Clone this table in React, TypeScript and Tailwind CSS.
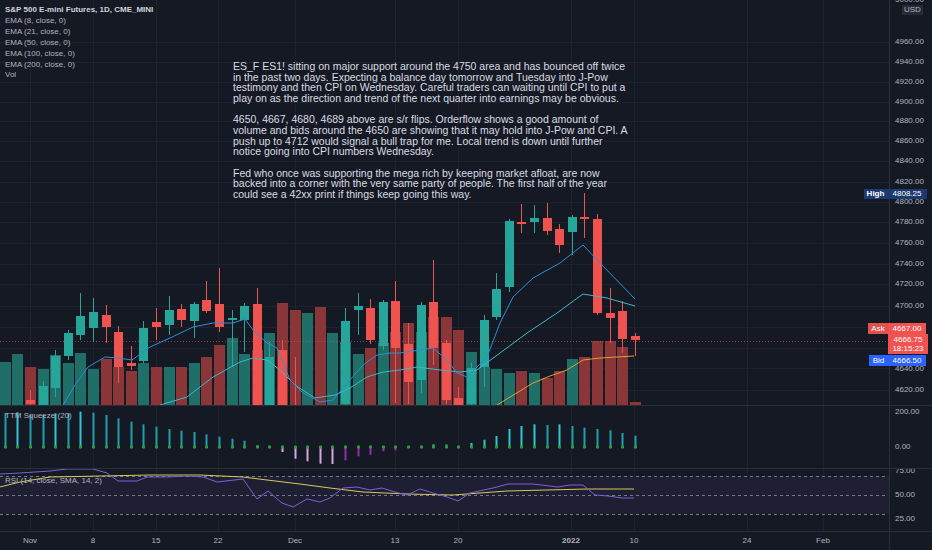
import React from 'react'

// bar spacing on the time scale, first visible bar (Nov 1) sits at x=30
const STEP = 12.6
const cx = (i: number) => Math.round(30 + i * STEP)

// [index, up, bodyTop, bodyBottom, wickTop, wickBottom] in pixel space
const candles: [number, number, number, number, number, number][] = [
  [0, 0, 400, 404, 390, 405],
  [1, 1, 386, 405, 381, 405],
  [2, 1, 356, 388, 350, 397],
  [3, 1, 333, 356, 330, 360],
  [4, 1, 316, 335, 293, 340],
  [5, 1, 312, 328, 298, 342],
  [6, 0, 315, 327, 305, 343],
  [7, 0, 332, 367, 326, 383],
  [8, 0, 363, 366, 346, 370],
  [9, 1, 328, 361, 321, 363],
  [10, 0, 322, 327, 308, 340],
  [11, 1, 310, 325, 296, 335],
  [12, 0, 309, 320, 304, 327],
  [13, 1, 304, 321, 302, 338],
  [14, 0, 300, 311, 281, 313],
  [15, 0, 304, 327, 268, 332],
  [16, 1, 318, 320, 310, 367],
  [17, 1, 306, 320, 303, 352],
  [18, 0, 304, 405, 288, 405],
  [19, 1, 357, 405, 342, 405],
  [20, 0, 350, 405, 340, 405],
  [21, 0, 405, 405, 357, 405],
  [25, 1, 321, 404, 308, 405],
  [26, 1, 306, 310, 293, 335],
  [27, 0, 308, 340, 299, 344],
  [28, 1, 302, 346, 300, 350],
  [29, 0, 301, 348, 281, 403],
  [30, 0, 344, 382, 323, 404],
  [31, 1, 305, 380, 302, 393],
  [32, 0, 302, 348, 260, 365],
  [33, 0, 343, 400, 340, 404],
  [34, 0, 398, 405, 387, 405],
  [35, 1, 368, 404, 363, 405],
  [36, 1, 320, 367, 315, 387],
  [37, 1, 289, 317, 273, 320],
  [38, 1, 221, 287, 219, 292],
  [39, 0, 222, 224, 204, 233],
  [40, 1, 218, 222, 205, 233],
  [41, 0, 218, 231, 203, 235],
  [42, 0, 229, 245, 224, 253],
  [43, 1, 217, 232, 215, 255],
  [44, 0, 217, 219, 193, 238],
  [45, 0, 219, 313, 214, 315],
  [46, 0, 313, 318, 288, 343],
  [47, 0, 311, 339, 301, 353],
  [48, 0, 336, 340, 333, 356],
]

const volumes: [number, number, number][] = [
  [-2, 1, 362], [-1, 1, 354], [0, 0, 367], [1, 1, 369], [2, 1, 355], [3, 1, 363],
  [4, 1, 353], [5, 1, 369], [6, 0, 359], [7, 0, 367], [8, 0, 371], [9, 1, 363],
  [10, 0, 367], [11, 1, 367], [12, 0, 367], [13, 1, 363], [14, 0, 357], [15, 0, 345],
  [16, 1, 338], [17, 1, 354], [18, 0, 350], [19, 1, 333], [20, 0, 303], [21, 0, 310],
  [22, 1, 313], [23, 0, 307], [24, 1, 333], [25, 1, 342], [26, 1, 354], [27, 0, 348],
  [28, 1, 343], [29, 0, 332], [30, 0, 323], [31, 1, 332], [32, 0, 317], [33, 0, 317],
  [34, 0, 330], [35, 1, 352], [36, 1, 367], [37, 1, 369], [38, 1, 373], [39, 0, 371],
  [40, 1, 373], [41, 0, 378], [42, 0, 371], [43, 1, 359], [44, 0, 357], [45, 0, 341],
  [46, 0, 341], [47, 0, 347], [48, 0, 402],
]

const ema8 = [[63,405],[75,385],[88,367],[105,357],[118,358],[132,360],[150,347],[170,338],[193,327],[213,323],[233,323],[245,319],[253,330],[267,343],[277,348],[290,380],[303,393],[320,402],[333,400],[350,380],[363,365],[377,355],[390,353],[400,353],[420,350],[433,348],[447,360],[457,373],[467,377],[487,357],[500,323],[513,297],[533,278],[560,263],[583,245],[602,265],[635,299]]
const ema21 = [[160,405],[187,397],[213,377],[240,362],[253,358],[267,360],[280,370],[295,385],[315,398],[335,395],[350,388],[367,377],[383,372],[400,370],[417,367],[440,370],[460,372],[477,370],[500,353],[527,333],[557,313],[583,294],[607,298],[635,306]]
const ema50 = [[497,405],[515,394],[533,383],[550,376],[567,370],[583,360],[600,358],[617,357],[634,356]]

// squeeze momentum, px above the zero line, starting at index -2
const ttm = [34, 34.7, 32, 32, 33.7, 33.7, 35.3, 34.3, 32, 28.7, 25.3, 22.7, 20.3, 18, 16.3, 15, 12.7, 10.3, 8.3, 6.3, 2, 1, -5, -11.7, -14.3, -16.7, -17, -13.3, -9.3, -7.7, -4.3, -3.3, -1, 0.5, 2.7, 2.7, 0.5, 4, 7.3, 11, 18, 21, 22.7, 22, 22.7, 21, 19.3, 18, 16.7, 14, 11.3]

const rsi = [[0,474],[20,473],[50,471],[67,469],[93,469],[107,473],[118,481],[137,481],[147,477],[167,477],[187,476],[203,477],[217,482],[243,479],[257,499],[268,491],[282,503],[293,507],[307,499],[320,502],[330,498],[343,488],[357,487],[370,490],[382,488],[395,492],[407,495],[420,489],[433,493],[447,497],[458,501],[470,493],[493,488],[508,484],[533,484],[558,487],[570,485],[583,485],[595,495],[608,496],[622,498],[634,498]]
const rsiMa = [[0,487],[20,482],[50,477],[100,476],[150,475],[200,475],[243,477],[267,480],[300,484],[330,488],[363,492],[407,494],[453,495],[480,493],[507,491],[547,490],[587,489],[634,489]]

// grid rows every 20 points; labels hidden behind the ask/last badges are left out
const gridRows = [42, 62, 82, 102, 121, 141, 161, 182, 202, 222, 243, 264, 284, 306, 327, 348, 368, 390]
const priceTicks: [string, number][] = [
  ['5000.00', 0], ['4960.00', 42], ['4940.00', 62], ['4920.00', 82], ['4900.00', 102],
  ['4880.00', 121], ['4860.00', 141], ['4840.00', 161], ['4820.00', 182], ['4800.00', 202],
  ['4780.00', 222], ['4760.00', 243], ['4740.00', 264], ['4720.00', 284], ['4700.00', 306],
  ['4640.00', 369], ['4620.00', 390],
]

const timeTicks: [string, number, boolean][] = [
  ['Nov', 30, false], ['8', 93, false], ['15', 156, false], ['22', 218, false],
  ['Dec', 295, false], ['13', 395, false], ['20', 458, false], ['2022', 571, true],
  ['10', 634, false], ['24', 747, false], ['Feb', 823, false],
]

const note = [
  'ES_F ES1! sitting on major support around the 4750 area and has bounced off twice',
  'in the past two days. Expecting a balance day tomorrow and Tuesday into J-Pow',
  'testimony and then CPI on Wednesday. Careful traders can waiting until CPI to put a',
  'play on as the direction and trend of the next quarter into earnings may be obvious.',
  '',
  '4650, 4667, 4680, 4689 above are s/r flips. Orderflow shows a good amount of',
  'volume and bids around the 4650 are showing that it may hold into J-Pow and CPI. A',
  'push up to 4712 would signal a bull trap for me. Local trend is down until further',
  'notice going into CPI numbers Wednesday.',
  '',
  'Fed who once was supporting the mega rich by keeping market afloat, are now',
  'backed into a corner with the very same party of people. The first half of the year',
  'could see a 42xx print if things keep going this way.',
]

const legend = ['EMA (8, close, 0)', 'EMA (21, close, 0)', 'EMA (50, close, 0)', 'EMA (100, close, 0)', 'EMA (200, close, 0)', 'Vol']

const pts = (p: number[][], dy = 0) => p.map(([x, y]) => `${x},${y - dy}`).join(' ')

function VGrid({ h }: { h: number }) {
  return (
    <>
      {timeTicks.map(([, x]) => (
        <line key={x} x1={x + 0.5} x2={x + 0.5} y1={0} y2={h} stroke="#1e222d" />
      ))}
    </>
  )
}

function MainPane() {
  return (
    <div className="relative flex h-[405px]">
      <div className="relative w-[889px] h-full">
        <svg width={889} height={405} className="absolute inset-0">
          {gridRows.map(y => (
            <line key={y} x1={0} x2={889} y1={y + 0.5} y2={y + 0.5} stroke="#1e222d" />
          ))}
          <VGrid h={405} />
          {volumes.map(([i, up, top]) => (
            <rect key={i} x={cx(i) - 5} y={top} width={11} height={405 - top} fill={up ? '#1f6f68' : '#8a3538'} />
          ))}
          {candles.map(([i, up, bt, bb, wt, wb]) => {
            const c = up ? '#26a69a' : '#ef5350'
            return (
              <g key={i}>
                <rect x={cx(i)} y={wt} width={1} height={wb - wt} fill={c} />
                {bb > bt && <rect x={cx(i) - 4} y={bt} width={9} height={Math.max(1, bb - bt)} fill={c} />}
              </g>
            )
          })}
          <polyline points={pts(ema50)} fill="none" stroke="#d9a23a" strokeWidth={1} />
          <polyline points={pts(ema21)} fill="none" stroke="#3fb8c8" strokeWidth={1} />
          <polyline points={pts(ema8)} fill="none" stroke="#2a8fd8" strokeWidth={1} />
          <line x1={0} x2={889} y1={341.5} y2={341.5} stroke="#ef5350" strokeOpacity={0.55} strokeDasharray="1 2" />
        </svg>

        <div className="absolute left-[5px] top-[5px] text-[8px] leading-[10.9px]">
          <div className="font-semibold text-[#d1d4dc]">S&amp;P 500 E-mini Futures, 1D, CME_MINI</div>
          {legend.map(l => (
            <div key={l} className="text-[#b2b5be]">{l}</div>
          ))}
        </div>

        <div className="absolute left-[233px] top-[61px] text-[10.5px] leading-[10.67px] text-[#dadce3] whitespace-pre">
          {note.map((l, k) => (
            <div key={k} className="h-[10.67px]">{l}</div>
          ))}
        </div>
      </div>
      <div className="w-px bg-[#2a2e39]" />
      <div className="relative flex-1 overflow-hidden text-[8px] text-[#b2b5be]">
        {priceTicks.map(([t, y]) => (
          <span key={t} className="absolute left-[5px] -translate-y-1/2 leading-none" style={{ top: y }}>{t}</span>
        ))}
        <span className="absolute left-[12px] top-[5px] h-[10px] px-[2px] bg-[#252a36] leading-[10px] text-[#b2b5be]">USD</span>
      </div>

      {/* price badges */}
      <div className="absolute left-[864px] top-[189px] flex h-[10px] text-[8px] leading-[10px] text-white">
        <span className="w-[23px] text-center bg-[#1f3a70] font-semibold">High</span>
        <span className="w-[40px] text-center bg-[#1c3a6e]">4808.25</span>
      </div>
      <div className="absolute left-[868px] top-[323px] flex h-[11px] text-[8px] leading-[11px] text-white">
        <span className="w-[20px] text-center bg-[#e0504d]">Ask</span>
        <span className="w-[38px] text-center bg-[#ef5350]">4667.00</span>
      </div>
      <div className="absolute left-[888px] top-[334px] w-[40px] h-[20px] bg-[#f05350] text-white text-[8px] leading-[9.5px] flex flex-col items-center justify-center">
        <span>4666.75</span>
        <span>18:15:23</span>
      </div>
      <div className="absolute left-[869px] top-[355px] flex h-[11px] text-[8px] leading-[11px] text-white">
        <span className="w-[19px] text-center bg-[#2962ff]">Bid</span>
        <span className="w-[38px] text-center bg-[#2962ff]">4666.50</span>
      </div>
    </div>
  )
}

function TtmPane() {
  return (
    <div className="flex h-[62px]">
      <div className="relative w-[889px] h-full">
        <svg width={889} height={62} className="absolute inset-0">
          <VGrid h={62} />
          {ttm.map((v, k) => {
            const i = k - 2
            const prev = k > 0 ? ttm[k - 1] : v
            const color = v >= 0 ? (v > prev ? '#30c6d4' : '#1f9fab') : (v < prev ? '#d7a6dc' : '#9c27b0')
            const y = v >= 0 ? 41 - v : 41
            return (
              <g key={k}>
                <rect x={cx(i) - 0.5} y={y} width={2} height={Math.max(0.5, Math.abs(v))} fill={color} />
                <circle cx={cx(i) + 0.5} cy={41} r={1.7} fill="#2f9a3c" />
              </g>
            )
          })}
        </svg>
        <div className="absolute left-[5px] top-[5px] text-[8px] leading-[10px] text-[#b2b5be]">TTM Squeeze (20)</div>
      </div>
      <div className="w-px bg-[#2a2e39]" />
      <div className="relative flex-1 text-[8px] text-[#b2b5be]">
        <span className="absolute left-[5px] top-[6px] -translate-y-1/2 leading-none">200.00</span>
        <span className="absolute left-[5px] top-[41px] -translate-y-1/2 leading-none">0.00</span>
      </div>
    </div>
  )
}

function RsiPane() {
  return (
    <div className="flex h-[62px]">
      <div className="relative w-[889px] h-full">
        <svg width={889} height={62} className="absolute inset-0">
          <rect x={0} y={7} width={889} height={38} fill="#7e57c2" fillOpacity={0.1} />
          <VGrid h={62} />
          {[7.5, 26.5, 45.5].map(y => (
            <line key={y} x1={0} x2={885} y1={y} y2={y} stroke="#787b86" strokeDasharray="3 3" />
          ))}
          <polyline points={pts(rsiMa, 469)} fill="none" stroke="#d9c95c" strokeWidth={1} />
          <polyline points={pts(rsi, 469)} fill="none" stroke="#7b61d6" strokeWidth={1} />
        </svg>
        <div className="absolute left-[5px] top-[7px] text-[8px] leading-[10px] text-[#b2b5be]">RSI (14, close, SMA, 14, 2)</div>
      </div>
      <div className="w-px bg-[#2a2e39]" />
      <div className="relative flex-1 overflow-hidden text-[8px] text-[#b2b5be]">
        <span className="absolute left-[5px] top-[2px] -translate-y-1/2 leading-none">75.00</span>
        <span className="absolute left-[5px] top-[26px] -translate-y-1/2 leading-none">50.00</span>
        <span className="absolute left-[5px] top-[50px] -translate-y-1/2 leading-none">25.00</span>
      </div>
    </div>
  )
}

function TimeAxis() {
  return (
    <div className="flex h-[18px]">
      <div className="relative w-[889px] h-full text-[8px] text-[#b2b5be]">
        {timeTicks.map(([t, x, bold]) => (
          <span key={t} className={`absolute top-[9px] -translate-x-1/2 -translate-y-1/2 leading-none ${bold ? 'font-semibold' : ''}`} style={{ left: x }}>{t}</span>
        ))}
      </div>
      <div className="w-px bg-[#2a2e39]" />
      <div className="flex-1" />
    </div>
  )
}

export default function App() {
  return (
    <div className="w-[932px] h-[550px] overflow-hidden bg-[#151924] flex flex-col font-['Liberation_Sans',Arial,sans-serif]">
      <MainPane />
      <div className="h-px bg-[#2a2e39]" />
      <TtmPane />
      <div className="h-px bg-[#2a2e39]" />
      <RsiPane />
      <div className="h-px bg-[#2a2e39]" />
      <TimeAxis />
    </div>
  )
}
